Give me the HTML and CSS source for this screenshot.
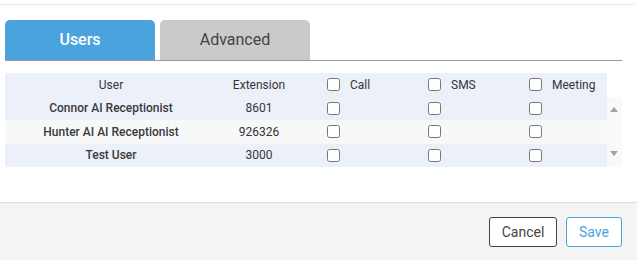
FILE: index.html
```html
<!DOCTYPE html>
<html lang="en">
<head>
    <meta charset="UTF-8">
    <meta name="viewport" content="width=device-width, initial-scale=1.0">
    <title>Permissions</title>
    <link rel="stylesheet" href="styles.css">
</head>
<body>
<div class="top-rule"></div>

<div class="dialog-body">
    <div class="tabs">
        <div class="tab active">Users</div>
        <div class="tab">Advanced</div>
    </div>

    <div class="perm-table">
        <div class="row head">
            <div class="cell">User</div>
            <div class="cell">Extension</div>
            <div class="cell check"><input type="checkbox"><span>Call</span></div>
            <div class="cell check"><input type="checkbox"><span>SMS</span></div>
            <div class="cell check"><input type="checkbox"><span>Meeting</span></div>
        </div>

        <div class="table-body">
            <div class="rows">
                <div class="row">
                    <div class="cell name">Connor AI Receptionist</div>
                    <div class="cell">8601</div>
                    <div class="cell check"><input type="checkbox"></div>
                    <div class="cell check"><input type="checkbox"></div>
                    <div class="cell check"><input type="checkbox"></div>
                </div>
                <div class="row alt">
                    <div class="cell name">Hunter AI AI Receptionist</div>
                    <div class="cell">926326</div>
                    <div class="cell check"><input type="checkbox"></div>
                    <div class="cell check"><input type="checkbox"></div>
                    <div class="cell check"><input type="checkbox"></div>
                </div>
                <div class="row">
                    <div class="cell name">Test User</div>
                    <div class="cell">3000</div>
                    <div class="cell check"><input type="checkbox"></div>
                    <div class="cell check"><input type="checkbox"></div>
                    <div class="cell check"><input type="checkbox"></div>
                </div>
            </div>
            <!-- 스크롤바 모양만 -->
            <div class="scrollbar">
                <span class="arrow up"></span>
                <span class="arrow down"></span>
            </div>
        </div>
    </div>
</div>

<div class="footer">
    <button class="btn cancel">Cancel</button>
    <button class="btn save">Save</button>
</div>
</body>
</html>
```

FILE: styles.css
```css
body {
    margin: 0;
    font-family: Roboto, "Liberation Sans", sans-serif;
    color: #444;
    background-color: #fff;
}

.top-rule {
    height: 4px;
    border-bottom: 1px solid #e8e8e8;
    margin-right: 2px;
}

.dialog-body {
    padding: 15px 15px 0 5px;
    height: 182px;
    box-sizing: border-box;
}

.tabs {
    display: flex;
    gap: 5px;
    border-bottom: 1px solid #999;
}

.tab {
    width: 150px;
    height: 40px;
    line-height: 40px;
    text-align: center;
    font-size: 16px;
    border-radius: 5px 5px 0 0;
    background-color: #cacaca;
    color: #444;
}

.tab.active {
    background-color: #4aa3dd;
    color: #fff;
    font-weight: 500;
}

.perm-table {
    margin-top: 12px;
    font-size: 12px;
    color: #353535;
}

.row {
    display: grid;
    grid-template-columns: 212px 84px 101px 101px 104px;
    height: 23.5px;
    align-items: center;
    background-color: #ecf0f9;
}

.row.head {
    width: 602px;
}

.row.alt {
    background-color: #f7f8fa;
}

.cell {
    text-align: center;
    white-space: nowrap;
}

.cell.name {
    font-weight: 500;
    color: #3a3a3a;
}

.cell.check {
    display: flex;
    align-items: center;
    text-align: left;
    padding-left: 26px;
}

.cell.check input {
    margin: 0 10px 0 0;
    width: 13px;
    height: 13px;
}

.table-body {
    display: flex;
}

.rows {
    width: 602px;
}

.scrollbar {
    width: 15px;
    background-color: #f9f9f9;
    position: relative;
}

.arrow {
    position: absolute;
    left: 3px;
    width: 0;
    height: 0;
    border-left: 4px solid transparent;
    border-right: 4px solid transparent;
}

.arrow.up {
    top: 10px;
    border-bottom: 5px solid #a3a3a3;
}

.arrow.down {
    bottom: 11px;
    border-top: 5px solid #a3a3a3;
}

.footer {
    border-top: 1px solid #dcdcdc;
    background-color: #f4f4f4;
    height: 58px;
    margin-top: 15px;
    display: flex;
    justify-content: flex-end;
    align-items: flex-start;
    gap: 9px;
    padding: 14px 15px 0 0;
    box-sizing: border-box;
}

.btn {
    height: 30px;
    font-family: Roboto, "Liberation Sans", sans-serif;
    font-size: 14px;
    border-radius: 3px;
    background-color: #fff;
    cursor: pointer;
}

.btn.cancel {
    width: 68px;
    border: 1px solid #444;
    color: #444;
}

.btn.save {
    width: 56px;
    border: 1px solid #4aa3dd;
    color: #4aa3dd;
}
```
